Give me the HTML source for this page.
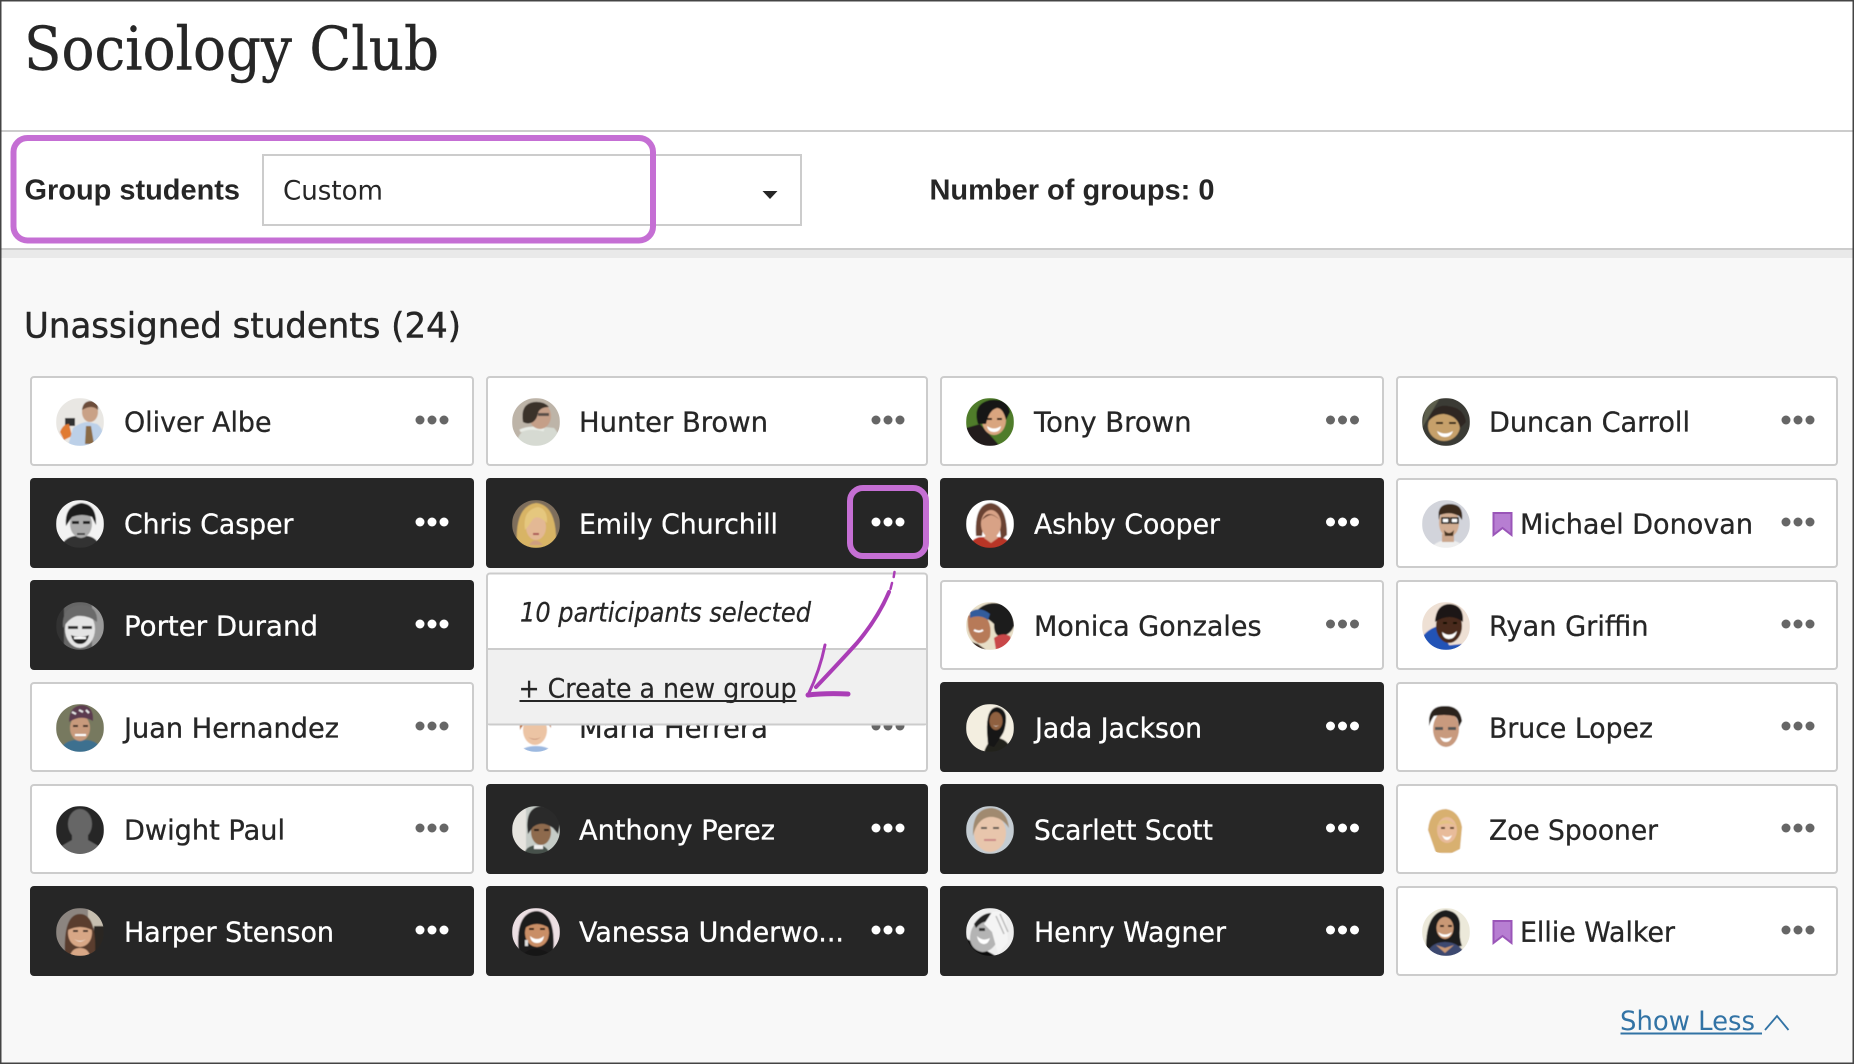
<!DOCTYPE html>
<html lang="en">
<head>
<meta charset="utf-8">
<title>Sociology Club</title>
<style>
html,body{margin:0;padding:0;background:#f8f8f8;width:1854px;height:1064px;overflow:hidden}
svg{display:block}
text{font-family:"DejaVu Sans","Liberation Sans",sans-serif;fill:#262626}
.n{font-size:27.5px;stroke:#262626;stroke-width:.3px}
.n.w{fill:#fff;stroke:#fff}
.b{font-family:"Liberation Sans",sans-serif;font-weight:700;font-size:28.5px}
.c{fill:#fff;stroke:#ccc;stroke-width:2}
.d{fill:#262626}
.k{fill:#666}
.e{fill:#fff}
.bm{fill:#b77ed2;stroke:#9a55b8;stroke-width:2}
.p{fill:none;stroke:#c56fd4;stroke-width:6}
g[clip-path]{filter:url(#s)}
</style>
</head>
<body>
<svg width="1854" height="1064" viewBox="0 0 1854 1064" xmlns="http://www.w3.org/2000/svg">
<defs>
<clipPath id="c"><circle cx="24" cy="24" r="24"/></clipPath>
<filter id="s" x="0" y="0" width="100%" height="100%"><feGaussianBlur stdDeviation=".55"/></filter>
</defs>

<!-- page areas -->
<rect width="1854" height="1064" fill="#f8f8f8"/>
<rect width="1854" height="249" fill="#fff"/>
<rect y="130" width="1854" height="2" fill="#ccc"/>
<rect y="248" width="1854" height="2" fill="#ccc"/>
<rect y="250" width="1854" height="8" fill="#e9e9e9"/>

<text x="24" y="69.500" font-size="60" style="font-family:'DejaVu Serif','Liberation Serif',serif;stroke:#262626;stroke-width:.4px" textLength="415" lengthAdjust="spacingAndGlyphs">Sociology Club</text>
<text class="b" x="24.500" y="199.500" textLength="215.500" lengthAdjust="spacingAndGlyphs">Group students</text>
<rect x="263" y="155" width="538" height="70" fill="#fff" stroke="#ccc" stroke-width="2"/>
<text x="283" y="199.500" font-size="27" textLength="100" lengthAdjust="spacingAndGlyphs">Custom</text>
<path d="M762.500 191h15l-7.500 8z" fill="#262626"/>
<text class="b" x="929.500" y="199.500" textLength="285" lengthAdjust="spacingAndGlyphs">Number of groups: 0</text>
<rect class="p" x="13.500" y="138" width="639.500" height="102.500" rx="14"/>

<text x="24" y="337.500" font-size="35" style="stroke:#262626;stroke-width:.45px" textLength="437" lengthAdjust="spacingAndGlyphs">Unassigned students (24)</text>

<!-- Row 1 -->
<rect class="c" x="31" y="377" width="442" height="88" rx="3"/>
<rect class="c" x="487" y="377" width="440" height="88" rx="3"/>
<rect class="c" x="941" y="377" width="442" height="88" rx="3"/>
<rect class="c" x="1397" y="377" width="440" height="88" rx="3"/>
<text class="n" x="124" y="431.500" textLength="147.500" lengthAdjust="spacingAndGlyphs">Oliver Albe</text>
<text class="n" x="579" y="431.500" textLength="189" lengthAdjust="spacingAndGlyphs">Hunter Brown</text>
<text class="n" x="1034" y="431.500" textLength="157.500" lengthAdjust="spacingAndGlyphs">Tony Brown</text>
<text class="n" x="1489" y="431.500" textLength="201" lengthAdjust="spacingAndGlyphs">Duncan Carroll</text>
<g class="k"><circle cx="420" cy="420" r="4.500"/><circle cx="432" cy="420" r="4.500"/><circle cx="444" cy="420" r="4.500"/><circle cx="876" cy="420" r="4.500"/><circle cx="888" cy="420" r="4.500"/><circle cx="900" cy="420" r="4.500"/><circle cx="1330.500" cy="420" r="4.500"/><circle cx="1342.500" cy="420" r="4.500"/><circle cx="1354.500" cy="420" r="4.500"/><circle cx="1786" cy="420" r="4.500"/><circle cx="1798" cy="420" r="4.500"/><circle cx="1810" cy="420" r="4.500"/></g>

<!-- Row 2 -->
<rect class="d" x="30" y="478" width="444" height="90" rx="4"/>
<rect class="d" x="486" y="478" width="442" height="90" rx="4"/>
<rect class="d" x="940" y="478" width="444" height="90" rx="4"/>
<rect class="c" x="1397" y="479" width="440" height="88" rx="3"/>
<text class="n w" x="124" y="533.500" textLength="169.500" lengthAdjust="spacingAndGlyphs">Chris Casper</text>
<text class="n w" x="579" y="533.500" textLength="199" lengthAdjust="spacingAndGlyphs">Emily Churchill</text>
<text class="n w" x="1034" y="533.500" textLength="186" lengthAdjust="spacingAndGlyphs">Ashby Cooper</text>
<path class="bm" d="M1493.500 513h18v22l-9-7-9 7z"/>
<text class="n" x="1520" y="533.500" textLength="233" lengthAdjust="spacingAndGlyphs">Michael Donovan</text>
<g class="e"><circle cx="420" cy="522" r="4.500"/><circle cx="432" cy="522" r="4.500"/><circle cx="444" cy="522" r="4.500"/><circle cx="876" cy="522" r="4.500"/><circle cx="888" cy="522" r="4.500"/><circle cx="900" cy="522" r="4.500"/><circle cx="1330.500" cy="522" r="4.500"/><circle cx="1342.500" cy="522" r="4.500"/><circle cx="1354.500" cy="522" r="4.500"/></g>
<g class="k"><circle cx="1786" cy="522" r="4.500"/><circle cx="1798" cy="522" r="4.500"/><circle cx="1810" cy="522" r="4.500"/></g>

<!-- Row 3 -->
<rect class="d" x="30" y="580" width="444" height="90" rx="4"/>
<rect class="c" x="941" y="581" width="442" height="88" rx="3"/>
<rect class="c" x="1397" y="581" width="440" height="88" rx="3"/>
<text class="n w" x="124" y="635.500" textLength="194" lengthAdjust="spacingAndGlyphs">Porter Durand</text>
<text class="n" x="1034" y="635.500" textLength="227.500" lengthAdjust="spacingAndGlyphs">Monica Gonzales</text>
<text class="n" x="1489" y="635.500" textLength="159.500" lengthAdjust="spacingAndGlyphs">Ryan Griffin</text>
<g class="e"><circle cx="420" cy="624" r="4.500"/><circle cx="432" cy="624" r="4.500"/><circle cx="444" cy="624" r="4.500"/></g>
<g class="k"><circle cx="1330.500" cy="624" r="4.500"/><circle cx="1342.500" cy="624" r="4.500"/><circle cx="1354.500" cy="624" r="4.500"/><circle cx="1786" cy="624" r="4.500"/><circle cx="1798" cy="624" r="4.500"/><circle cx="1810" cy="624" r="4.500"/></g>

<!-- Row 4 -->
<rect class="c" x="31" y="683" width="442" height="88" rx="3"/>
<rect class="c" x="487" y="683" width="440" height="88" rx="3"/>
<rect class="d" x="940" y="682" width="444" height="90" rx="4"/>
<rect class="c" x="1397" y="683" width="440" height="88" rx="3"/>
<text class="n" x="124" y="737.500" textLength="215" lengthAdjust="spacingAndGlyphs">Juan Hernandez</text>
<text class="n" x="579" y="737.500" textLength="189" lengthAdjust="spacingAndGlyphs">Maria Herrera</text>
<text class="n w" x="1035" y="737.500" textLength="167" lengthAdjust="spacingAndGlyphs">Jada Jackson</text>
<text class="n" x="1489" y="737.500" textLength="164" lengthAdjust="spacingAndGlyphs">Bruce Lopez</text>
<g class="k"><circle cx="420" cy="726" r="4.500"/><circle cx="432" cy="726" r="4.500"/><circle cx="444" cy="726" r="4.500"/><circle cx="876" cy="726" r="4.500"/><circle cx="888" cy="726" r="4.500"/><circle cx="900" cy="726" r="4.500"/><circle cx="1786" cy="726" r="4.500"/><circle cx="1798" cy="726" r="4.500"/><circle cx="1810" cy="726" r="4.500"/></g>
<g class="e"><circle cx="1330.500" cy="726" r="4.500"/><circle cx="1342.500" cy="726" r="4.500"/><circle cx="1354.500" cy="726" r="4.500"/></g>

<!-- Row 5 -->
<rect class="c" x="31" y="785" width="442" height="88" rx="3"/>
<rect class="d" x="486" y="784" width="442" height="90" rx="4"/>
<rect class="d" x="940" y="784" width="444" height="90" rx="4"/>
<rect class="c" x="1397" y="785" width="440" height="88" rx="3"/>
<text class="n" x="124" y="839.500" textLength="161" lengthAdjust="spacingAndGlyphs">Dwight Paul</text>
<text class="n w" x="579" y="839.500" textLength="196" lengthAdjust="spacingAndGlyphs">Anthony Perez</text>
<text class="n w" x="1034" y="839.500" textLength="179" lengthAdjust="spacingAndGlyphs">Scarlett Scott</text>
<text class="n" x="1489" y="839.500" textLength="169" lengthAdjust="spacingAndGlyphs">Zoe Spooner</text>
<g class="k"><circle cx="420" cy="828" r="4.500"/><circle cx="432" cy="828" r="4.500"/><circle cx="444" cy="828" r="4.500"/><circle cx="1786" cy="828" r="4.500"/><circle cx="1798" cy="828" r="4.500"/><circle cx="1810" cy="828" r="4.500"/></g>
<g class="e"><circle cx="876" cy="828" r="4.500"/><circle cx="888" cy="828" r="4.500"/><circle cx="900" cy="828" r="4.500"/><circle cx="1330.500" cy="828" r="4.500"/><circle cx="1342.500" cy="828" r="4.500"/><circle cx="1354.500" cy="828" r="4.500"/></g>

<!-- Row 6 -->
<rect class="d" x="30" y="886" width="444" height="90" rx="4"/>
<rect class="d" x="486" y="886" width="442" height="90" rx="4"/>
<rect class="d" x="940" y="886" width="444" height="90" rx="4"/>
<rect class="c" x="1397" y="887" width="440" height="88" rx="3"/>
<text class="n w" x="124" y="941.500" textLength="210" lengthAdjust="spacingAndGlyphs">Harper Stenson</text>
<text class="n w" x="579" y="941.500" textLength="265" lengthAdjust="spacingAndGlyphs">Vanessa Underwo...</text>
<text class="n w" x="1034" y="941.500" textLength="192" lengthAdjust="spacingAndGlyphs">Henry Wagner</text>
<path class="bm" d="M1493.500 921h18v22l-9-7-9 7z"/>
<text class="n" x="1520" y="941.500" textLength="155" lengthAdjust="spacingAndGlyphs">Ellie Walker</text>
<g class="e"><circle cx="420" cy="930" r="4.500"/><circle cx="432" cy="930" r="4.500"/><circle cx="444" cy="930" r="4.500"/><circle cx="876" cy="930" r="4.500"/><circle cx="888" cy="930" r="4.500"/><circle cx="900" cy="930" r="4.500"/><circle cx="1330.500" cy="930" r="4.500"/><circle cx="1342.500" cy="930" r="4.500"/><circle cx="1354.500" cy="930" r="4.500"/></g>
<g class="k"><circle cx="1786" cy="930" r="4.500"/><circle cx="1798" cy="930" r="4.500"/><circle cx="1810" cy="930" r="4.500"/></g>

<!-- Avatars: column 1 -->
<g transform="translate(56,398)" clip-path="url(#c)">
<rect width="48" height="48" fill="#e9e7e3"/><rect x="9" y="20" width="10" height="8" fill="#333"/><path d="M4 34q3-8 9-8l3 12-8 4z" fill="#e07a30"/><path d="M12 48l5-18q8-6 15-6l9 2q6 4 7 14v8z" fill="#bcd0e8"/><path d="M30 28h5l3 18h-9z" fill="#8a6a45"/><ellipse cx="34" cy="14" rx="8" ry="10" fill="#c9a186"/><path d="M26 12q1-9 9-9 8 1 7 9-6-6-16 0z" fill="#6d4d3a"/>
</g>
<g transform="translate(56,500)" clip-path="url(#c)">
<rect width="48" height="48" fill="#f2f2f2"/><path d="M4 48q4-10 14-12h14q10 2 12 12z" fill="#333"/><ellipse cx="25" cy="24" rx="11" ry="14" fill="#aaa"/><path d="M10 26Q8 6 25 3q16 1 15 22l-4-8q-10-4-20 0z" fill="#1c1c1c"/><path d="M16 21h7v3h-7zM27 21h7v3h-7z" fill="#222"/><path d="M21 33h8v2h-8z" fill="#444"/>
</g>
<g transform="translate(56,602)" clip-path="url(#c)">
<rect width="48" height="48" fill="#666"/><rect x="36" y="0" width="12" height="48" fill="#999"/><rect x="0" y="0" width="8" height="48" fill="#333"/><ellipse cx="24" cy="27" rx="15" ry="19" fill="#e4e4e4"/><path d="M7 26Q5 4 26 3q16 1 15 17-9-7-20-6-8 2-14 12z" fill="#6a6a6a"/><path d="M12 24h10v3H12zM26 24h10v3H26z" fill="#333"/><path d="M15 33q9 4 18 0-2 9-9 9t-9-9z" fill="#222"/><path d="M18 35h12v2H18z" fill="#fff"/>
</g>
<g transform="translate(56,704)" clip-path="url(#c)">
<rect width="48" height="48" fill="#77795f"/><path d="M4 48q2-10 14-12h14q12 2 14 12z" fill="#3c6f8f"/><ellipse cx="24" cy="24" rx="10" ry="13" fill="#c89a7c"/><path d="M13 18Q13 2 26 1q12 1 11 16-12-7-24 1z" fill="#5c3a50"/><path d="M16 8l4 2m3-4l4 2m3-2l3 3" stroke="#e8e8e8" stroke-width="2"/><path d="M19 30h11v2H19z" fill="#fff"/><path d="M17 21h5v2h-5zM27 21h5v2h-5z" fill="#3a2a20"/>
</g>
<g transform="translate(56,806)" clip-path="url(#c)">
<rect width="48" height="48" fill="#262626"/><ellipse cx="24" cy="18" rx="12" ry="15" fill="#666"/><path d="M16 28h16v6l14 8v8H2v-8l14-8z" fill="#666"/>
</g>
<g transform="translate(56,908)" clip-path="url(#c)">
<rect width="48" height="48" fill="#8c8580"/><rect x="32" width="16" height="20" fill="#c7bfb0"/><rect x="38" y="18" width="10" height="30" fill="#2a2523"/><path d="M9 48Q7 6 24 6q17 0 15 42z" fill="#5a3d2e"/><ellipse cx="24" cy="25" rx="12" ry="14" fill="#d8a786"/><path d="M12 22q2-12 12-12t12 12q-12-6-24 0z" fill="#5a3d2e"/><path d="M18 31q6 4 12 0-6 5-12 0z" fill="#fff"/><path d="M17 22h5v2h-5zM27 22h5v2h-5z" fill="#3a2a20"/><path d="M14 48q2-8 10-8t10 8z" fill="#d8a786"/>
</g>

<!-- Avatars: column 2 -->
<g transform="translate(512,398)" clip-path="url(#c)">
<rect width="48" height="48" fill="#bdb4a8"/><path d="M4 48q2-18 20-20l18 2q6 6 6 18z" fill="#d6dad2"/><path d="M8 33q10-5 24-1" stroke="#e9ece6" stroke-width="3" fill="none"/><ellipse cx="28" cy="18" rx="11" ry="13" fill="#c59f88"/><path d="M11 24Q8 6 22 4q10-1 15 5-9 0-11 6-1 6-5 9-5 3-10 0z" fill="#3b322c"/><path d="M26 15h11v3H26z" fill="#5a5048"/>
</g>
<g transform="translate(512,500)" clip-path="url(#c)">
<rect width="48" height="48" fill="#7e6e5c"/><path d="M5 48Q2 6 24 3q22 2 20 45z" fill="#d8b465"/><ellipse cx="24" cy="27" rx="10" ry="13" fill="#e3b894"/><path d="M13 30Q10 10 26 7q10 2 9 16-9-9-14-4-3 5-8 11z" fill="#e5c77e"/><path d="M17 45q6-9 14 0z" fill="#cf9f80"/><path d="M21 33h6v2h-6z" fill="#a55"/>
</g>
<g transform="translate(512,704)" clip-path="url(#c)">
<rect width="48" height="48" fill="#fff"/><path d="M8 48q4-6 16-6t16 6z" fill="#9db9e0"/><ellipse cx="23" cy="26" rx="12" ry="15" fill="#ecc4a4"/><path d="M8 26Q6 6 24 5q16 1 15 19-6-10-16-9-10 1-15 11z" fill="#b8692e"/><path d="M16 33q7 4 13 0-6 5-13 0z" fill="#a5604c"/>
</g>
<g transform="translate(512,806)" clip-path="url(#c)">
<rect width="48" height="48" fill="#c5cbc6"/><rect width="14" height="48" fill="#e6e4df"/><path d="M12 48q2-8 12-9t14 9z" fill="#46514c"/><path d="M22 39h9v4h-9z" fill="#eee"/><ellipse cx="29" cy="26" rx="10" ry="13" fill="#8e6a4e"/><path d="M16 28Q12 1 30 0q18 2 18 18l-2 10-5-6q-11-8-20-1z" fill="#2a2a2a"/><path d="M22 23h5v2h-5zM32 23h5v2h-5z" fill="#201712"/>
</g>
<g transform="translate(512,908)" clip-path="url(#c)">
<rect width="48" height="48" fill="#ecdfe3"/><path d="M7 48Q2 4 25 3q20 2 16 45z" fill="#1f1a1c"/><ellipse cx="25" cy="25" rx="12" ry="14" fill="#c98e66"/><path d="M13 20q3-9 12-10 10 1 12 10-12-8-24 0z" fill="#1f1a1c"/><path d="M18 28q7 6 14 0-1 7-7 7t-7-7z" fill="#fff"/><path d="M17 20h5v2h-5zM28 20h5v2h-5z" fill="#2a1a10"/><rect x="13" y="32" width="3" height="6" fill="#ddd"/><path d="M10 48q6-8 15-7t15 7z" fill="#181818"/>
</g>

<!-- Avatars: column 3 -->
<g transform="translate(966,398)" clip-path="url(#c)">
<rect width="48" height="48" fill="#4f7c2a"/><path d="M0 30l14-4 20 22H0z" fill="#211d1c"/><ellipse cx="28" cy="22" rx="12" ry="15" fill="#d9a57f"/><path d="M12 26Q6 6 24 2q18-2 20 12l-4 8q-3-12-9-12-8 2-11 16z" fill="#141414"/><path d="M21 28q7 5 14 0-1 6-7 6t-7-6z" fill="#fff"/><path d="M21 20h5v2h-5zM31 20h5v2h-5z" fill="#201510"/>
</g>
<g transform="translate(966,500)" clip-path="url(#c)">
<rect width="48" height="48" fill="#fff"/><path d="M2 48q4-10 12-11h20q10 2 12 11z" fill="#b83428"/><path d="M10 36Q8 4 25 3q16 2 16 32l-6 5-2-20H18l-2 16z" fill="#6b4230"/><ellipse cx="25" cy="24" rx="10" ry="14" fill="#d8a286"/><path d="M16 20q6-12 18 0-6-5-9-5t-9 5z" fill="#6b4230"/><path d="M18 38l7 5 7-5-3-5H21z" fill="#d8a286"/>
</g>
<g transform="translate(966,602)" clip-path="url(#c)">
<rect width="48" height="48" fill="#e8dfc8"/><path d="M8 12Q18-2 36 2q12 6 12 22-4 10-14 10-6 0-6-12-8-8-20-10z" fill="#1f1a1c"/><path d="M30 48l-2-12q8-6 16-2l4 14z" fill="#c9474a"/><path d="M2 14Q10 8 20 15q6 8 4 20-4 8-12 6Q0 34 2 14z" fill="#b77a58"/><path d="M4 10q10-6 20 2l-2 6q-8-6-18-2z" fill="#305c9c"/><path d="M8 28q5 3 9 0" stroke="#fff" stroke-width="2" fill="none"/><path d="M0 38l12 4 8 6H0z" fill="#3a2a24"/>
</g>
<g transform="translate(966,704)" clip-path="url(#c)">
<rect width="48" height="48" fill="#f3eee0"/><path d="M18 48q4-12 12-14 12 0 16 14z" fill="#23201f"/><path d="M21 28Q20 4 31 3q10 2 9 14-1 10-4 14l-8 12-6-2z" fill="#171413"/><ellipse cx="30" cy="17" rx="6.500" ry="9" fill="#8f6040"/><path d="M27 21q3 2 6 0-3 3-6 0z" fill="#fff"/>
</g>
<g transform="translate(966,806)" clip-path="url(#c)">
<rect width="48" height="48" fill="#c4ccd2"/><ellipse cx="24" cy="27" rx="16" ry="19" fill="#e8c6ac"/><path d="M7 30Q6 2 26 2q15 2 17 20-8-12-20-11-12 2-16 19z" fill="#a08a6f"/><path d="M15 21h6v2h-6zM27 21h6v2h-6z" fill="#5e564f"/><path d="M19 33q5 3 10 0-5 2-10 0z" fill="#fff"/><path d="M18 33h12v2H18z" fill="#c88"/>
</g>
<g transform="translate(966,908)" clip-path="url(#c)">
<rect width="48" height="48" fill="#eee"/><path d="M0 30l12 8 18 10H0z" fill="#111"/><path d="M4 32Q4 14 18 12l12 4 2 16q-6 12-16 12Q6 42 4 32z" fill="#b4b4b4"/><path d="M8 16Q18 2 30 6L24 14q-8-2-14 6z" fill="#222"/><path d="M26 4q10-2 14 4l2 26-10 12-6-22-8-8z" fill="#f4f4f4"/><path d="M30 8l8 18M34 6l8 18" stroke="#bbb" stroke-width="1.500"/><path d="M11 28q6 6 13 2-2 7-7 6t-6-8z" fill="#fff"/><path d="M13 20h6v3h-6z" fill="#333"/>
</g>

<!-- Avatars: column 4 -->
<g transform="translate(1422,398)" clip-path="url(#c)">
<rect width="48" height="48" fill="#3a3a34"/><path d="M0 30l4-26 14-4z" fill="#5d5f4e"/><path d="M28 48q10-2 20-14v14z" fill="#444851"/><ellipse cx="22" cy="28" rx="16" ry="15" fill="#c6a06a"/><path d="M6 24Q10 6 26 8q16 2 18 16l-6 6q-2-12-16-14-10 0-16 8z" fill="#2d2824"/><path d="M14 24h7v2h-7zM27 24h7v2h-7z" fill="#2a1a10"/><path d="M15 33q8 5 16 0-2 6-8 6t-8-6z" fill="#fff"/>
</g>
<g transform="translate(1422,500)" clip-path="url(#c)">
<rect width="48" height="48" fill="#d2d4db"/><path d="M8 48q8-8 18-8t18 8z" fill="#eee"/><path d="M20 34h12v8H20z" fill="#cba68c"/><ellipse cx="27" cy="23" rx="10" ry="14" fill="#d2ad92"/><path d="M17 20Q14 4 28 4q14 0 12 16l-3-4q-9-5-19-1z" fill="#3a2a1f"/><rect x="20" y="18" width="7" height="5" fill="#fff" stroke="#111" stroke-width="1.500"/><rect x="29" y="18" width="7" height="5" fill="#fff" stroke="#111" stroke-width="1.500"/><path d="M22 30q5 6 10 0l-1 6h-8z" fill="#4a3524"/>
</g>
<g transform="translate(1422,602)" clip-path="url(#c)">
<rect width="48" height="48" fill="#eee0d4"/><path d="M0 36q4-8 16-12l14 24H0z" fill="#2452b6"/><ellipse cx="27" cy="24" rx="13" ry="17" fill="#4a2c1c"/><path d="M13 20Q14 2 28 2q14 1 13 18-13-10-28 0z" fill="#1c1614"/><path d="M20 30q8 6 15-1-2 8-8 8t-7-7z" fill="#fff"/><path d="M21 20h4v2h-4zM31 20h4v2h-4z" fill="#0d0806"/><path d="M20 44l20-2v6H20z" fill="#2452b6"/>
</g>
<g transform="translate(1422,704)" clip-path="url(#c)">
<rect width="48" height="48" fill="#fff"/><ellipse cx="24" cy="25" rx="13" ry="18" fill="#c89a7e"/><path d="M7 16Q8 1 24 2q14 0 16 15l-3 6q-1-10-5-11-10-2-20 0-3 4-5 10z" fill="#2a211c"/><path d="M13 23h8v3h-8zM26 23h8v3h-8z" fill="#555"/><path d="M18 33q6 3 12 0-2 5-6 5t-6-5z" fill="#fff"/>
</g>
<g transform="translate(1422,806)" clip-path="url(#c)">
<rect width="48" height="48" fill="#fff"/><path d="M6 24Q8 3 24 3q13 2 16 18l-2 22-8 4H14z" fill="#d8b070"/><ellipse cx="25" cy="24" rx="10" ry="13" fill="#e8bb9a"/><path d="M15 20q6-12 20 0-9-5-20 0z" fill="#e3c183"/><path d="M20 29q5 4 10 0-2 5-5 5t-5-5z" fill="#fff"/><path d="M19 21h4v2h-4zM28 21h4v2h-4z" fill="#5e3f28"/>
</g>
<g transform="translate(1422,908)" clip-path="url(#c)">
<rect width="48" height="48" fill="#ece9da"/><path d="M4 40Q4 4 24 2q15 2 14 18-1 10 2 18l-30 4z" fill="#1d1a1a"/><ellipse cx="23" cy="20" rx="8.500" ry="11" fill="#c99874"/><path d="M16 24q7 5 14 0-2 5-7 5t-7-5z" fill="#fff"/><path d="M18 17h4v2h-4zM26 17h4v2h-4z" fill="#2b1b12"/><path d="M4 48q4-14 19-14t21 14z" fill="#3e4a70"/><path d="M14 37l9 8 9-8-9 3z" fill="#c99874"/>
</g>

<!-- Menu popup -->
<rect x="487" y="573.500" width="440" height="151" rx="3" fill="#fff" stroke="#ccc" stroke-width="2"/>
<path d="M488 650h438v73.500H488z" fill="#f0f0f0"/>
<rect x="488" y="648" width="438" height="2" fill="#ccc"/>
<text x="520" y="621.500" font-size="26.500" font-style="italic" style="stroke:#262626;stroke-width:.25px" textLength="291" lengthAdjust="spacingAndGlyphs">10 participants selected</text>
<text x="518.500" y="697.500" font-size="27" style="stroke:#262626;stroke-width:.2px" textLength="278" lengthAdjust="spacingAndGlyphs">+ Create a new group</text>
<rect x="519.500" y="700" width="277" height="2" fill="#262626"/>

<!-- Dots highlight and hand-drawn arrow -->
<rect class="p" x="850" y="488" width="76" height="68" rx="13"/>
<path d="M894.500 572l-.8 5M892 583l-1.500 6" fill="none" stroke="#aa3db6" stroke-width="2.500" stroke-linecap="round"/>
<path d="M889 592Q878 618 857 643 838 664 816 687" fill="none" stroke="#aa3db6" stroke-width="4" stroke-linecap="round"/>
<path d="M825 645Q820 670 808 695" fill="none" stroke="#aa3db6" stroke-width="3" stroke-linecap="round"/>
<path d="M808 695Q825 693 848 694" fill="none" stroke="#aa3db6" stroke-width="5" stroke-linecap="round"/>

<!-- Show Less -->
<text x="1620" y="1030" font-size="27" style="fill:#3273a5" textLength="135" lengthAdjust="spacingAndGlyphs">Show Less</text>
<rect x="1620.500" y="1032.500" width="141.500" height="2" fill="#3273a5"/>
<path d="M1765 1030l12-14 11.500 14" fill="none" stroke="#3273a5" stroke-width="1.800"/>

<!-- Screenshot frame -->
<rect x=".75" y=".75" width="1852.500" height="1062.500" fill="none" stroke="#444" stroke-width="1.500"/>
</svg>
</body>
</html>
